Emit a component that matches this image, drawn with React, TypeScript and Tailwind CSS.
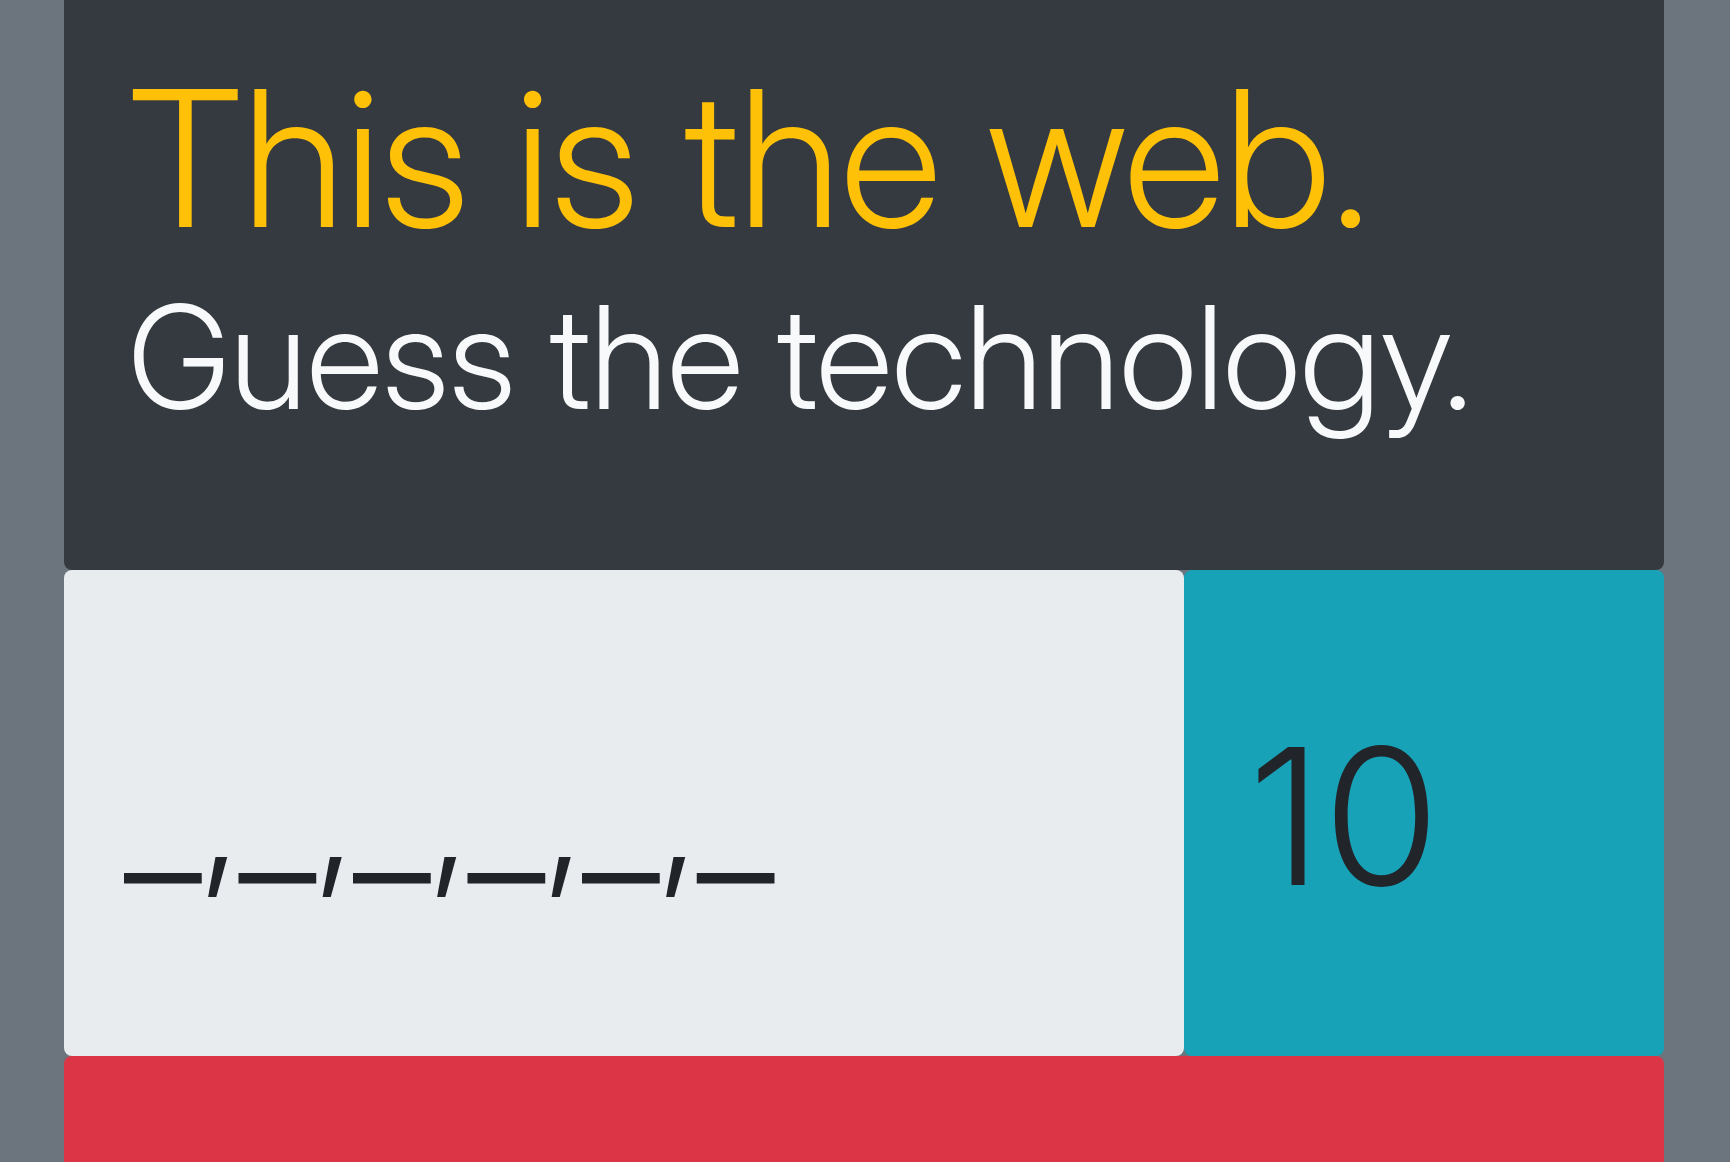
export default function App() {
  return (
    <div className="h-screen overflow-hidden bg-[#6c757d] pr-[66px] pl-16 font-['Inter_Display','Inter',sans-serif] text-[#212529]">
      <main>
        <header className="rounded-b-lg bg-[#343a40] px-16 pt-11 pb-32">
          <h1 className="text-[190px] leading-[228px] font-light text-[#ffc107]">This is the web.</h1>
          <h2 className="text-[143px] leading-[170px] font-light text-[#f8f9fa]">Guess the technology.</h2>
        </header>
        <div className="grid grid-cols-[7fr_3fr]">
          <section className="rounded-lg bg-[#e9ecef] px-[60px] pt-[126px] pb-[132px]">
            <p className="text-[174px] leading-[228px] font-light">_,_,_,_,_,_</p>
          </section>
          <section className="rounded-lg bg-[#17a2b8] px-16 pt-[132px]">
            <p className="font-['Inter',sans-serif] text-[190px] leading-[228px] font-light">10</p>
          </section>
        </div>
        <section className="h-80 rounded-lg bg-[#dc3545]" />
      </main>
    </div>
  );
}
